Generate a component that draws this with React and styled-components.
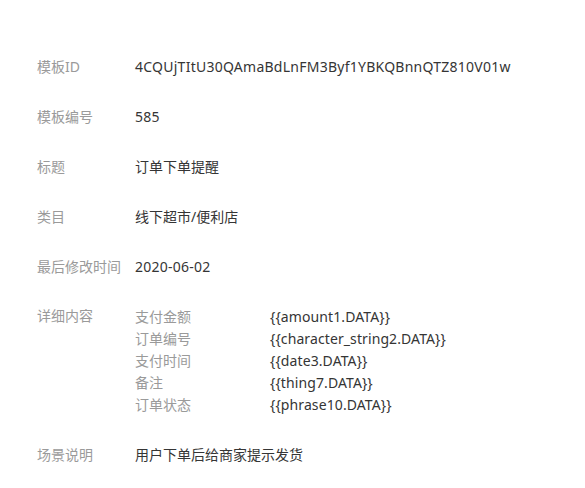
import React from 'react';
import styled, { createGlobalStyle } from 'styled-components';

const GlobalStyle = createGlobalStyle`
  body {
    margin: 0;
    background: #fff;
    font-family: "Noto Sans", "Noto Sans CJK SC", sans-serif;
    font-size: 14px;
  }
`;

const Wrapper = styled.div`
  padding: 42px 0 0 37px;
`;

const Row = styled.div`
  display: flex;
  padding: ${(p) => (p.$detail ? '14px 0' : '15px 0')};
  line-height: 20px;
`;

const Label = styled.div`
  width: 98px;
  flex-shrink: 0;
  color: #9a9a9a;
`;

const Value = styled.div`
  color: #353535;
  letter-spacing: ${(p) => (p.$latin ? '0.25px' : '0')};
`;

const SubList = styled.div`
  display: flex;
  flex-direction: column;
`;

const SubRow = styled.div`
  display: flex;
  line-height: 22px;
`;

const SubLabel = styled.div`
  width: 135px;
  flex-shrink: 0;
  color: #9a9a9a;
`;

const SubValue = styled.div`
  color: #353535;
  letter-spacing: 0.1px;
`;

const fields = [
  ['模板ID', '4CQUjTItU30QAmaBdLnFM3Byf1YBKQBnnQTZ810V01w', true],
  ['模板编号', '585', true],
  ['标题', '订单下单提醒'],
  ['类目', '线下超市/便利店'],
  ['最后修改时间', '2020-06-02', true],
];

const details = [
  ['支付金额', '{{amount1.DATA}}'],
  ['订单编号', '{{character_string2.DATA}}'],
  ['支付时间', '{{date3.DATA}}'],
  ['备注', '{{thing7.DATA}}'],
  ['订单状态', '{{phrase10.DATA}}'],
];

export default function App() {
  return (
    <>
      <GlobalStyle />
      <Wrapper>
        {fields.map(([k, v, latin]) => (
          <Row key={k}>
            <Label>{k}</Label>
            <Value $latin={latin}>{v}</Value>
          </Row>
        ))}
        <Row $detail>
          <Label>详细内容</Label>
          <SubList>
            {details.map(([k, v]) => (
              <SubRow key={k}>
                <SubLabel>{k}</SubLabel>
                <SubValue>{v}</SubValue>
              </SubRow>
            ))}
          </SubList>
        </Row>
        <Row>
          <Label>场景说明</Label>
          <Value>用户下单后给商家提示发货</Value>
        </Row>
      </Wrapper>
    </>
  );
}
